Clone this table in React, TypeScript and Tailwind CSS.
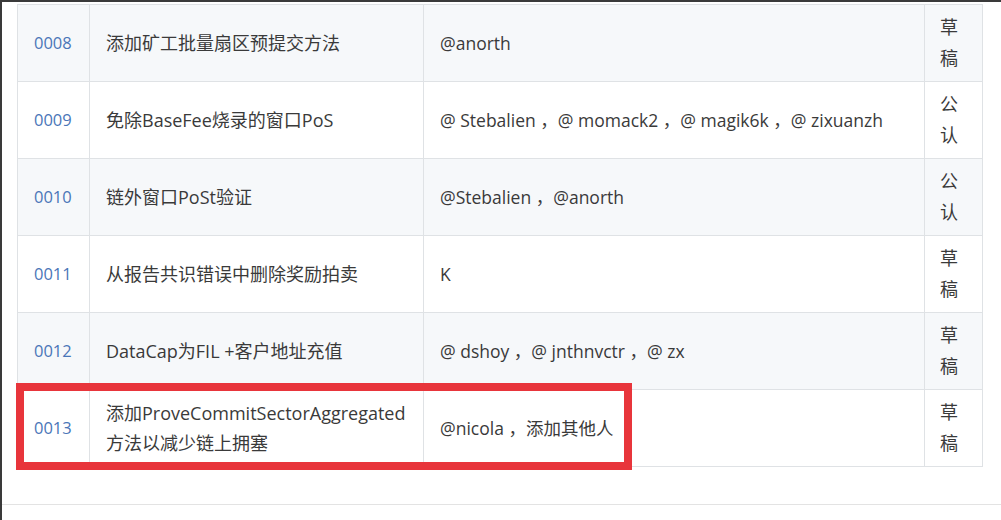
type Row = {
  id: string;
  title: React.ReactNode;
  authors: string;
  status: [string, string];
};

const rows: Row[] = [
  { id: "0008", title: "添加矿工批量扇区预提交方法", authors: "@anorth", status: ["草", "稿"] },
  {
    id: "0009",
    title: "免除BaseFee烧录的窗口PoS",
    authors: "@ Stebalien ，@ momack2 ，@ magik6k ，@ zixuanzh",
    status: ["公", "认"],
  },
  { id: "0010", title: "链外窗口PoSt验证", authors: "@Stebalien ，@anorth", status: ["公", "认"] },
  { id: "0011", title: "从报告共识错误中删除奖励拍卖", authors: "K", status: ["草", "稿"] },
  { id: "0012", title: "DataCap为FIL +客户地址充值", authors: "@ dshoy ，@ jnthnvctr ，@ zx", status: ["草", "稿"] },
  {
    id: "0013",
    title: (
      <>
        添加ProveCommitSectorAggregated
        <br />
        方法以减少链上拥塞
      </>
    ),
    authors: "@nicola ，添加其他人",
    status: ["草", "稿"],
  },
];

export default function App() {
  return (
    <div
      className="relative w-[1001px] h-[520px] overflow-hidden bg-white border-t-2 border-l-2 border-[#3a3a3a] text-[#3a3a3a]"
      style={{ fontFamily: '"Open Sans", "Noto Sans CJK SC", sans-serif' }}
    >
      <div className="ml-[15px] mt-[2px] w-[966px] border-t border-r border-[#dfe2e5]">
        {rows.map((r, i) => (
          <div
            key={r.id}
            className={`grid grid-cols-[72px_334px_501px_58px] h-[77px] border-b border-[#dfe2e5] ${
              i % 2 === 0 ? "bg-[#f6f8fa]" : "bg-white"
            }`}
          >
            <div className="flex items-center border-l border-[#dfe2e5] pl-4 text-[16.5px] text-[#4a76b8]">
              {r.id}
            </div>
            <div className="flex items-center border-l border-[#dfe2e5] pl-4 text-[18px] leading-[30px]">
              <span>{r.title}</span>
            </div>
            <div className="flex items-center border-l border-[#dfe2e5] pl-4 text-[17.5px]">
              {r.authors}
            </div>
            <div className="flex flex-col justify-center border-l border-[#dfe2e5] pl-[15px] text-[18px] leading-[31px]">
              <span>{r.status[0]}</span>
              <span>{r.status[1]}</span>
            </div>
          </div>
        ))}
      </div>

      <div className="mt-[37px] border-t border-[#e3e3e3]" />

      {/* red highlight around row 0013 */}
      <div className="absolute left-[14px] top-[381px] w-[616px] h-[87px] border-[8px] border-[#e8353b]" />
    </div>
  );
}
